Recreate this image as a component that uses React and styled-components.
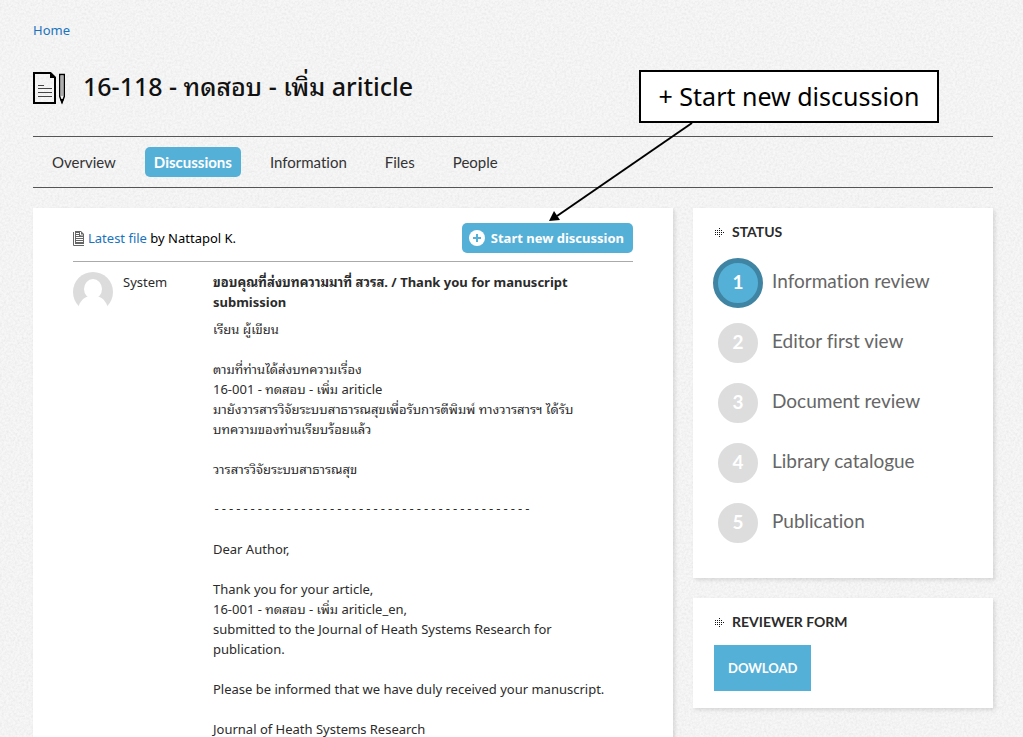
import React from "react"
import styled, { createGlobalStyle } from "styled-components"

const noise =
  "url(\"data:image/svg+xml,%3Csvg xmlns='http://www.w3.org/2000/svg' width='200' height='200'%3E%3Cfilter id='n'%3E%3CfeTurbulence type='fractalNoise' baseFrequency='0.45' numOctaves='3' stitchTiles='stitch'/%3E%3CfeColorMatrix values='0 0 0 0 0.4 0 0 0 0 0.4 0 0 0 0 0.4 0.3 0 0 0 -0.1'/%3E%3C/filter%3E%3Crect width='200' height='200' filter='url(%23n)'/%3E%3C/svg%3E\")"

const GlobalStyle = createGlobalStyle`
  * {
    box-sizing: border-box;
  }
  body {
    margin: 0;
    background: #f7f7f7 ${noise};
    color: #2b2b2b;
    font-family: "Noto Sans", "Noto Sans Thai Looped", Loma, Garuda, Umpush, Waree, "Noto Serif Thai", sans-serif;
    font-size: 13px;
    font-variant-ligatures: none;
    line-height: 20px;
  }
`

const Page = styled.div`
  padding: 20px 30px 0 33px;
`
const Header = styled.header`
  position: relative;
`
const Anchor = styled.a`
  color: #1a73be;
  text-decoration: none;
`
const TitleRow = styled.div`
  display: flex;
  align-items: center;
  gap: 17px;
  height: 40px;
  margin: 28px 0;
`
const Title = styled.h1`
  margin: 0;
  padding-bottom: 4px;
  color: #111;
  font-size: 25px;
  font-weight: 500;
  line-height: 40px;
`
const Nav = styled.nav`
  display: flex;
  align-items: center;
  gap: 20px;
  height: 52px;
  padding-left: 10px;
  border-top: 1px solid #555;
  border-bottom: 1px solid #555;
`
const NavLink = styled.a`
  padding: 0 9px;
  border-radius: 5px;
  background: ${(props) => (props.$active ? "#55b0d7" : "transparent")};
  color: ${(props) => (props.$active ? "#fff" : "#333")};
  font-family: Lato, "Noto Sans", sans-serif;
  font-size: 15px;
  font-weight: ${(props) => (props.$active ? 700 : 400)};
  line-height: 30px;
  text-decoration: none;
`
const Callout = styled.div`
  position: absolute;
  top: 50px;
  right: 54px;
  width: 300px;
  border: 2px solid #000;
  background: #fff;
  color: #000;
  font-size: 25px;
  line-height: 49px;
  text-align: center;
`
const Arrow = styled.svg`
  position: absolute;
  top: 50px;
  left: -92px;
`
const Columns = styled.div`
  display: grid;
  grid-template-columns: minmax(0, 1fr) 300px;
  gap: 20px;
  margin-top: 20px;
`
const Card = styled.section`
  background: #fff;
  box-shadow: 2px 2px 4px rgba(0, 0, 0, 0.12);
`
const MainCard = styled(Card)`
  padding: 15px 40px 0;
`
const Side = styled.aside`
  display: flex;
  flex-direction: column;
  gap: 20px;
`
const SideCard = styled(Card)`
  padding: 14px 20px 17px;
`
const Toolbar = styled.div`
  display: flex;
  justify-content: space-between;
  align-items: center;
  padding-bottom: 8px;
  border-bottom: 1px solid #aaa;
`
const Latest = styled.div`
  display: flex;
  align-items: center;
  gap: 4px;
  color: #000;
`
const StartButton = styled.button`
  display: flex;
  align-items: center;
  gap: 6px;
  height: 30px;
  padding: 0 9px 0 7px;
  border: 0;
  border-radius: 5px;
  background: #55b0d7;
  color: #fff;
  font: 700 13px "Noto Sans", sans-serif;
`
const Post = styled.article`
  display: grid;
  grid-template-columns: 40px 80px minmax(0, 1fr);
  column-gap: 10px;
  padding-top: 10px;
`
const PostTitle = styled.h2`
  margin: 0 0 7px;
  font-size: 13px;
  font-weight: 700;
  line-height: 20px;
`
const PostBody = styled.div`
  white-space: pre-line;
`
const Divider = styled.p`
  margin: 20px 0;
  font-family: "DejaVu Sans Mono", monospace;
  font-size: 12px;
`
const SideTitle = styled.h3`
  display: flex;
  align-items: center;
  gap: 8px;
  margin: 0;
  font-family: Lato, "Noto Sans", sans-serif;
  font-size: 14px;
  font-weight: 700;
  line-height: 20px;
`
const Steps = styled.ol`
  margin: 11px 0 8px;
  padding: 0;
  list-style: none;
`
const Step = styled.li`
  display: flex;
  align-items: center;
  gap: 9px;
  height: 60px;
  color: #666;
  font-family: Lato, "Noto Sans", sans-serif;
  font-size: 19px;
`
const StepLabel = styled.span`
  padding-bottom: 4px;
`
const Num = styled.span`
  width: 50px;
  height: 50px;
  border: 5px solid ${(props) => (props.$active ? "#3f84a2" : "#fff")};
  border-radius: 50%;
  background: ${(props) => (props.$active ? "#55b0d7" : "#ddd")};
  color: #fff;
  font-weight: 700;
  line-height: 38px;
  text-align: center;
`
const Download = styled.button`
  display: block;
  height: 46px;
  margin: 13px 0 0 1px;
  padding: 0 14px;
  border: 0;
  background: #55b0d7;
  color: #fff;
  font: 700 13px Lato, "Noto Sans", sans-serif;
`

const ArticleIcon = () => (
  <svg width="33" height="33" viewBox="0 0 33 33" fill="none">
    <path d="M1 1h16.500l4.500 4.500V31H1z" stroke="#000" strokeWidth="2" />
    <path d="M17 0l6 6h-6z" fill="#000" />
    <path d="M5 13.500h6" stroke="#444" />
    <path d="M5 16.500h14M5 20.500h14M5 24.500h14" stroke="#444" />
    <path d="M26.700 2.500h4.600v22l-2.300 6-2.300-6z" fill="#eee" stroke="#000" strokeWidth="1.400" />
    <path d="M29 3v21" stroke="#999" strokeWidth="1.500" />
    <path d="M27 27h4l-2 5z" fill="#000" />
  </svg>
)

const FileIcon = () => (
  <svg width="11" height="15" viewBox="0 0 11 15" fill="none">
    <path d="M.5 1v13.500H11" stroke="#666" />
    <path d="M2 0h6l3 3v10H2z" fill="#666" />
    <path d="M3 2.500h3M3 4.500h3M3 6.500h7M3 8.500h7M3 10.500h7" stroke="#fff" />
    <path d="M7.500 1v3H10" stroke="#fff" />
  </svg>
)

const PlusIcon = () => (
  <svg width="16" height="16" viewBox="0 0 16 16">
    <circle cx="8" cy="8" r="8" fill="#fff" />
    <path d="M8 4v8M4 8h8" stroke="#55b0d7" strokeWidth="2" />
  </svg>
)

const Avatar = () => (
  <svg width="40" height="40" viewBox="0 0 40 40">
    <circle cx="20" cy="20" r="20" fill="#dcdcdc" />
    <ellipse cx="20" cy="17" rx="9" ry="10" fill="#fff" />
    <path d="M5 36C7 29 11 25 16 24.500h8C29 25 33 29 35 36v4H5z" fill="#fff" />
  </svg>
)

// dotted arrow, one entry per row: [first column, dot count]
const dots = [[4, 1], [0, 4], [0, 5], [0, 4], [4, 1]]
const DotsIcon = () => (
  <svg width="11" height="9" viewBox="-2 0 11 9" fill="#111">
    {dots.map(([start, count], row) =>
      Array.from({ length: count }, (_, i) => (
        <rect key={`${row}-${i}`} x={start + i * 2} y={row * 2} width="1" height="1" />
      ))
    )}
  </svg>
)

const tabs = ["Overview", "Discussions", "Information", "Files", "People"]
const steps = [
  "Information review",
  "Editor first view",
  "Document review",
  "Library catalogue",
  "Publication",
]

const thaiMessage = `เรียน ผู้เขียน

ตามที่ท่านได้ส่งบทความเรื่อง
16-001 - ทดสอบ - เพิ่ม ariticle
มายังวารสารวิจัยระบบสาธารณสุขเพื่อรับการตีพิมพ์ ทางวารสารฯ ได้รับ
บทความของท่านเรียบร้อยแล้ว

วารสารวิจัยระบบสาธารณสุข`

const englishMessage = `Dear Author,

Thank you for your article,
16-001 - ทดสอบ - เพิ่ม ariticle_en,
submitted to the Journal of Heath Systems Research for
publication.

Please be informed that we have duly received your manuscript.

Journal of Heath Systems Research`

const App = () => {
  return (
    <Page>
      <GlobalStyle />
      <Header>
        <Anchor href="#">Home</Anchor>
        <TitleRow>
          <ArticleIcon />
          <Title>16-118 - ทดสอบ - เพิ่ม ariticle</Title>
        </TitleRow>
        <Nav>
          {tabs.map((tab) => (
            <NavLink key={tab} href="#" $active={tab === "Discussions"}>
              {tab}
            </NavLink>
          ))}
        </Nav>
        <Callout>
          + Start new discussion
          <Arrow width="146" height="102" viewBox="0 0 146 102">
            <path d="M143 1L8 94" stroke="#000" strokeWidth="2" />
            <path d="M0 99l5-10 6 9z" fill="#000" />
          </Arrow>
        </Callout>
      </Header>
      <Columns>
        <MainCard>
          <Toolbar>
            <Latest>
              <FileIcon />
              <span>
                <Anchor href="#">Latest file</Anchor> by Nattapol K.
              </span>
            </Latest>
            <StartButton type="button">
              <PlusIcon />
              Start new discussion
            </StartButton>
          </Toolbar>
          <Post>
            <Avatar />
            <span>System</span>
            <div>
              <PostTitle>
                ขอบคุณที่ส่งบทความมาที่ สวรส. / Thank you for manuscript submission
              </PostTitle>
              <PostBody>{thaiMessage}</PostBody>
              <Divider>--------------------------------------------</Divider>
              <PostBody>{englishMessage}</PostBody>
            </div>
          </Post>
        </MainCard>
        <Side>
          <SideCard>
            <SideTitle>
              <DotsIcon />
              STATUS
            </SideTitle>
            <Steps>
              {steps.map((step, i) => (
                <Step key={step}>
                  <Num $active={i === 0}>{i + 1}</Num>
                  <StepLabel>{step}</StepLabel>
                </Step>
              ))}
            </Steps>
          </SideCard>
          <SideCard>
            <SideTitle>
              <DotsIcon />
              REVIEWER FORM
            </SideTitle>
            <Download type="button">DOWLOAD</Download>
          </SideCard>
        </Side>
      </Columns>
    </Page>
  )
}
export default App
